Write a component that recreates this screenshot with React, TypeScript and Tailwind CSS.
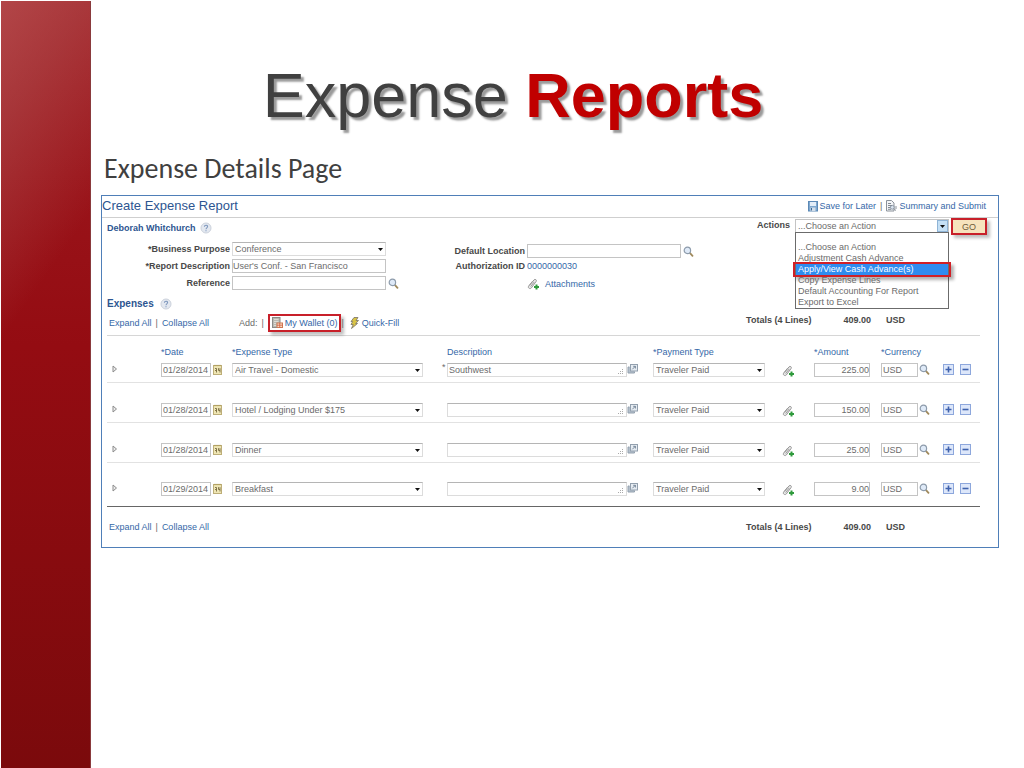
import { useState } from 'react';
import type { ReactNode } from 'react';

interface ExpenseLine {
    date: string;
    type: string;
    description: string;
    payment: string;
    amount: string;
    currency: string;
}

const initialLines: ExpenseLine[] = [
    { date: '01/28/2014', type: 'Air Travel - Domestic', description: 'Southwest', payment: 'Traveler Paid', amount: '225.00', currency: 'USD' },
    { date: '01/28/2014', type: 'Hotel / Lodging Under $175', description: '', payment: 'Traveler Paid', amount: '150.00', currency: 'USD' },
    { date: '01/28/2014', type: 'Dinner', description: '', payment: 'Traveler Paid', amount: '25.00', currency: 'USD' },
    { date: '01/29/2014', type: 'Breakfast', description: '', payment: 'Traveler Paid', amount: '9.00', currency: 'USD' },
];

const actions = [
    '...Choose an Action',
    'Adjustment Cash Advance',
    'Apply/View Cash Advance(s)',
    'Copy Expense Lines',
    'Default Accounting For Report',
    'Export to Excel',
];

const field = 'block h-[14px] border border-[#c4c4c4] bg-white text-[9px] leading-3 text-[#6b6b6b] outline-none';

function SearchIcon() {
    return (
        <svg width="11" height="11" viewBox="0 0 11 11" fill="none" className="shrink-0">
            <path d="M6.8 6.8l2.7 3" stroke="#a08a5c" strokeWidth="1.8" strokeLinecap="round" />
            <circle cx="4.4" cy="4.4" r="3.2" fill="#dfeaf8" stroke="#8d9bab" strokeWidth="1.2" />
        </svg>
    );
}

function HelpIcon() {
    return (
        <svg width="12" height="12" viewBox="0 0 12 12" fill="none" className="shrink-0">
            <circle cx="6" cy="6" r="5" fill="#e3e8f0" stroke="#ccd2dc" />
            <path d="M4.4 4.7c0-2 3.2-2 3.2-.1 0 1.2-1.6 1.3-1.6 2.6M6 8.3v1" stroke="#7f98bd" strokeWidth="1.1" />
        </svg>
    );
}

function ClipIcon() {
    return (
        <svg width="13" height="12" viewBox="0 0 13 12" fill="none" className="shrink-0">
            <path d="M2.6 7.3L7 1.900c1.100-1.300 3.200.1 2.100 1.600L4.400 9.900c-1.300 1.600-4.100.1-2.700-1.900L5.600 3.200" fill="#e6e6e6" stroke="#999" />
            <path d="M3.700 8.500L7.200 4" stroke="#999" strokeWidth=".9" />
            <path d="M9.500 6.500v5M7 9h5" stroke="#2f9a3c" strokeWidth="2" />
        </svg>
    );
}

function CalendarIcon() {
    return (
        <svg width="9" height="11" viewBox="0 0 9 11" fill="none" className="shrink-0">
            <rect x=".5" y="1.500" width="8" height="9" fill="#efe6b4" stroke="#bdae78" />
            <path d="M1 1.500h7" stroke="#b3a264" strokeWidth="1.200" />
            <path d="M2 4.500h1.500v4M3.500 6.500H2M5.500 4.200v2.300H7M7 4.200v4.300" stroke="#776a40" strokeWidth=".9" />
        </svg>
    );
}

function PopupIcon() {
    return (
        <svg width="11" height="10" viewBox="0 0 11 10" fill="none" className="shrink-0">
            <path d="M2.500 3H1v6h6.500V7.500" fill="#b4c0cc" stroke="#93a0ae" />
            <rect x="3.500" y=".5" width="7" height="6.500" fill="#e6ecf2" stroke="#93a0ae" />
            <path d="M5.300 5.300l3-3M6.200 2.300h2.200v2.200" stroke="#6d7f92" strokeWidth=".9" />
        </svg>
    );
}

function SaveIcon() {
    return (
        <svg width="10" height="11" viewBox="0 0 10 11" fill="none" className="shrink-0">
            <rect x=".5" y=".5" width="9" height="9.500" fill="#7fa8cf" stroke="#5c89b6" />
            <rect x="2" y="1" width="6" height="4" fill="#e4eef8" />
            <rect x="2.500" y="6.500" width="5" height="3.500" fill="#d3dfeb" />
            <path d="M3.500 7v2.500" stroke="#3d6792" />
        </svg>
    );
}

function SummaryIcon() {
    return (
        <svg width="11" height="12" viewBox="0 0 11 12" fill="none" className="shrink-0">
            <path d="M.5.500h5L8 3v8H.500z" fill="#f3f5f7" stroke="#8b929a" />
            <path d="M2 3.500h3M2 5.500h4M2 7.500h3M2 9.300h3" stroke="#777f88" strokeWidth=".9" />
            <circle cx="6.300" cy="7.300" r="1.900" fill="#dbe5f0" stroke="#7b8794" strokeWidth=".8" />
            <path d="M7.700 8.700l2.300 1.800M10 6v3" stroke="#8b929a" />
        </svg>
    );
}

function WalletIcon() {
    return (
        <svg width="11" height="11" viewBox="0 0 11 11" fill="none" className="shrink-0">
            <rect x=".5" y=".5" width="7.500" height="10" fill="#b9b9b2" stroke="#8a8a86" />
            <path d="M2 2.500h4.500M2 4.500h4.500M2 6.500h2M2 8.500h2" stroke="#dcdcd4" />
            <rect x="5" y="6" width="5.500" height="4.500" fill="#f5dcc0" stroke="#cf7a55" />
            <path d="M7.700 6v4.500M5 8.200h5.500" stroke="#d5593f" strokeWidth=".8" />
        </svg>
    );
}

function BoltIcon() {
    return (
        <svg width="9" height="12" viewBox="0 0 9 12" className="shrink-0">
            <path d="M4 .5h4L6 3.500h2.500L5.700 6.500h1.800L1.500 11.500l1.700-4H1l1.700-3H1z" fill="#d9c445" stroke="#77716a" strokeWidth=".8" />
        </svg>
    );
}

function Caret({ className = 'right-[3px]' }: { className?: string }) {
    return (
        <svg width="5" height="3" viewBox="0 0 5 3" className={`pointer-events-none absolute top-[6px] ${className}`}>
            <path d="M0 0h5L2.500 3z" fill="#111" />
        </svg>
    );
}

function Select({ id, label, value }: { id?: string; label?: string; value: string }) {
    return (
        <div className="relative w-full">
            <select
                id={id}
                aria-label={label}
                defaultValue={value}
                className={`${field} w-full appearance-none border-[#dcdcdc] border-t-[#b5b5b5] pl-[2px]`}
            >
                <option>{value}</option>
            </select>
            <Caret />
        </div>
    );
}

function Link({ children, className = '' }: { children: ReactNode; className?: string }) {
    return (
        <a href="#" className={`flex items-center whitespace-nowrap text-[#3568a8] ${className}`}>
            {children}
        </a>
    );
}

function ExpandLinks() {
    return (
        <div className="flex gap-1">
            <Link>Expand All</Link>
            <span>|</span>
            <Link>Collapse All</Link>
        </div>
    );
}

function Totals() {
    return (
        <div className="flex pr-[75px] font-bold text-[#484848]">
            <span>Totals (4 Lines)</span>
            <span className="ml-8">409.00</span>
            <span className="ml-[15px]">USD</span>
        </div>
    );
}

function LineButton({ sign, label, onClick }: { sign: '+' | '-'; label: string; onClick: () => void }) {
    return (
        <button onClick={onClick} aria-label={label} className="size-[11px] border border-[#8da7dc] bg-[#dde7fa]">
            <svg width="9" height="9" viewBox="0 0 9 9">
                <path d={sign === '+' ? 'M1.500 4.500h6M4.500 1.500v6' : 'M1.500 4.500h6'} stroke="#3f62ad" strokeWidth="1.600" />
            </svg>
        </button>
    );
}

function ActionPicker() {
    const [selected, setSelected] = useState(2);

    return (
        <div className="flex items-start pt-px">
            <label htmlFor="action" className="mr-[5px] font-bold text-[#484848]">Actions</label>
            <div className="relative w-[154px]">
                <select id="action" className={`${field} w-full appearance-none border-[#7f9db9] pl-[2px]`}>
                    <option>...Choose an Action</option>
                </select>
                <div className="pointer-events-none absolute top-px right-px h-3 w-[11px] border border-[#8fb4d6] bg-[#c5e0f5]" />
                <Caret className="right-[4px]" />
                <ul role="listbox" aria-label="Actions" className="absolute inset-x-0 top-[13px] z-10 border border-[#6b6b6b] bg-white pt-[9px] text-[#6b6b6b]">
                    {actions.map((action, i) => (
                        <li
                            key={action}
                            role="option"
                            aria-selected={i === selected}
                            onClick={() => setSelected(i)}
                            className={`relative h-[11px] pl-[2px] leading-[11px] ${i === selected ? 'bg-[#2f8cf0] text-white' : ''}`}
                        >
                            {action}
                            {i === selected && (
                                <span className="absolute -inset-x-[3px] -inset-y-[2px] border-2 border-[#d02027] shadow-[3px_3px_3px_rgba(0,0,0,0.3)]" />
                            )}
                        </li>
                    ))}
                </ul>
            </div>
            <button className="-mt-px ml-[2px] h-[17px] w-9 border-2 border-[#c8202a] bg-[#f6e3bd] text-[#6d5c3a] shadow-[3px_3px_3px_rgba(0,0,0,0.25)]">
                GO
            </button>
        </div>
    );
}

export default function App() {
    const [lines, setLines] = useState(initialLines);

    const addLine = (at: number) =>
        setLines((prev) => [...prev.slice(0, at + 1), { ...prev[at], description: '' }, ...prev.slice(at + 1)]);
    const removeLine = (at: number) => setLines((prev) => prev.filter((_, i) => i !== at));

    return (
        <div className="flex min-h-screen bg-white pt-px pl-px font-['Liberation_Sans',Arial,sans-serif]">
            <aside className="w-[90px] shrink-0 border-r border-[#8a3a3c] bg-[linear-gradient(125deg,rgba(188,92,92,0.65),rgba(180,90,90,0.45)_14%,transparent_38%),linear-gradient(180deg,#a01c22,#940c12_45%,#7b0a0c)]" />

            <main className="min-w-0 flex-1 pr-[25px] pl-[10px]">
                <h1 className="pt-[58px] pr-[74px] text-center text-[63px] leading-[72px] text-[#404040] [text-shadow:3px_3px_2px_rgba(0,0,0,0.4)]">
                    Expense <span className="font-bold text-[#c00000]">Reports</span>
                </h1>
                <h2 className="mt-[20px] pl-[3px] font-[Carlito,Lato,sans-serif] text-[28px] leading-9 text-[#404040]">
                    Expense Details Page
                </h2>

                <section className="mt-[8px] border border-[#4f7fb8] pb-[14px] text-[9px] leading-3 text-[#6b6b6b]">
                    <header className="flex h-[22px] items-center justify-between border-b border-[#cfcfcf] pr-3 pb-px">
                        <h3 className="text-[13px] text-[#2d5591]">Create Expense Report</h3>
                        <nav className="flex items-center gap-1">
                            <Link className="gap-[2px]"><SaveIcon />Save for Later</Link>
                            <span>|</span>
                            <Link className="gap-[2px]"><SummaryIcon />Summary and Submit</Link>
                        </nav>
                    </header>

                    <div className="grid grid-cols-[347px_minmax(0,1fr)_auto] pr-[11px]">
                        <div>
                            <h4 className="mt-1 flex items-center gap-1 pl-[5px] font-bold text-[#2d5591]">
                                Deborah Whitchurch <HelpIcon />
                            </h4>
                            <div className="mt-[8px] grid grid-cols-[128px_154px_auto] items-center gap-x-[2px] gap-y-[3px]">
                                <label htmlFor="purpose" className="text-right font-bold text-[#484848]">*Business Purpose</label>
                                <Select id="purpose" value="Conference" />
                                <span />
                                <label htmlFor="description" className="text-right font-bold text-[#484848]">*Report Description</label>
                                <input id="description" defaultValue="User's Conf. - San Francisco" className={field} />
                                <span />
                                <label htmlFor="reference" className="text-right font-bold text-[#484848]">Reference</label>
                                <input id="reference" className={field} />
                                <button aria-label="Look up reference"><SearchIcon /></button>
                            </div>
                        </div>

                        <div className="mt-[26px] grid grid-cols-[76px_154px_auto] content-start items-center gap-x-[2px] gap-y-[2px]">
                            <label htmlFor="location" className="text-right font-bold text-[#484848]">Default Location</label>
                            <input id="location" className={field} />
                            <button aria-label="Look up location"><SearchIcon /></button>
                            <span className="text-right font-bold whitespace-nowrap text-[#484848]">Authorization ID</span>
                            <Link>0000000030</Link>
                            <span />
                            <span />
                            <Link className="mt-1 gap-[5px]"><ClipIcon />Attachments</Link>
                        </div>

                        <ActionPicker />
                    </div>

                    <h4 className="mt-[8px] flex items-center gap-[6px] pl-[5px] text-[10px] font-bold text-[#2d5591]">
                        Expenses <HelpIcon />
                    </h4>
                    <div className="mr-[18px] ml-[5px] flex h-[26px] items-center justify-between border-b border-[#d6d6d6] pl-[2px]">
                        <div className="flex items-center">
                            <ExpandLinks />
                            <span className="ml-[30px]">Add:</span>
                            <span className="mx-1">|</span>
                            <Link className="h-[18px] gap-[2px] border-2 border-[#c8202a] bg-white px-[2px] shadow-[3px_3px_3px_rgba(0,0,0,0.25)]">
                                <WalletIcon />My Wallet (0)
                            </Link>
                            <span className="mr-[6px]">|</span>
                            <Link className="gap-[3px]"><BoltIcon />Quick-Fill</Link>
                        </div>
                        <div className="pb-[6px]"><Totals /></div>
                    </div>

                    <div className="pr-[18px] pl-[5px]">
                        <table className="w-full table-fixed border-b border-[#666]">
                            <colgroup>
                                <col className="w-[54px]" />
                                <col className="w-[71px]" />
                                <col className="w-[215px]" />
                                <col />
                                <col className="w-[129px]" />
                                <col className="w-[32px]" />
                                <col className="w-[67px]" />
                                <col className="w-[62px]" />
                                <col className="w-[37px]" />
                            </colgroup>
                            <thead>
                                <tr className="h-[22px] text-left align-bottom text-[#3568a8] *:p-0 *:font-normal">
                                    <th />
                                    <th>*Date</th>
                                    <th>*Expense Type</th>
                                    <th>Description</th>
                                    <th>*Payment Type</th>
                                    <th />
                                    <th>*Amount</th>
                                    <th>*Currency</th>
                                    <th />
                                </tr>
                            </thead>
                            <tbody>
                                {lines.map((line, i) => (
                                    <tr
                                        key={i}
                                        className="h-10 border-b border-[#e2e2e2] align-bottom *:p-0 *:pb-[5px] first:h-6 last:h-[44px] last:border-0 last:*:pb-[10px]"
                                    >
                                        <td>
                                            <button aria-label="Expand line" className="mb-[4px] ml-[5px] block">
                                                <svg width="6" height="8" viewBox="0 0 6 8" fill="#eee" stroke="#8c8c8c">
                                                    <path d="M1 1v6l3.500-3z" />
                                                </svg>
                                            </button>
                                        </td>
                                        <td>
                                            <div className="flex items-center gap-[2px]">
                                                <input aria-label="Date" defaultValue={line.date} className={`${field} w-[50px] pl-px`} />
                                                <button aria-label="Choose a date"><CalendarIcon /></button>
                                            </div>
                                        </td>
                                        <td>
                                            <div className="w-[191px]"><Select label="Expense Type" value={line.type} /></div>
                                        </td>
                                        <td>
                                            <div className="relative flex items-center pr-[15px]">
                                                {i === 0 && <span className="absolute -top-[2px] -left-[5px]">*</span>}
                                                <input aria-label="Description" defaultValue={line.description} className={`${field} min-w-0 flex-1 border-[#dcdcdc] border-t-[#b5b5b5] pl-[1px]`} />
                                                <svg width="6" height="6" viewBox="0 0 6 6" className="absolute right-[29px] bottom-[2px]" fill="#aaa">
                                                    <path d="M4 0h1v1H4zM4 2h1v1H4zM2 2h1v1H2zM4 4h1v1H4zM2 4h1v1H2zM0 4h1v1H0z" />
                                                </svg>
                                                <button aria-label="Open description" className="pb-[2px]"><PopupIcon /></button>
                                            </div>
                                        </td>
                                        <td>
                                            <div className="w-[112px]"><Select label="Payment Type" value={line.payment} /></div>
                                        </td>
                                        <td>
                                            <button aria-label="Attach receipt" className="block"><ClipIcon /></button>
                                        </td>
                                        <td>
                                            <input aria-label="Amount" defaultValue={line.amount} className={`${field} w-14 text-right`} />
                                        </td>
                                        <td>
                                            <div className="flex items-center gap-px">
                                                <input aria-label="Currency" defaultValue={line.currency} className={`${field} w-[37px] pl-px`} />
                                                <button aria-label="Look up currency"><SearchIcon /></button>
                                            </div>
                                        </td>
                                        <td>
                                            <div className="flex gap-[6px] pb-[2px]">
                                                <LineButton sign="+" label="Add line" onClick={() => addLine(i)} />
                                                <LineButton sign="-" label="Remove line" onClick={() => removeLine(i)} />
                                            </div>
                                        </td>
                                    </tr>
                                ))}
                            </tbody>
                        </table>
                    </div>

                    <footer className="mt-[14px] mr-[18px] ml-[5px] flex items-center justify-between pl-[2px]">
                        <ExpandLinks />
                        <Totals />
                    </footer>
                </section>
            </main>
        </div>
    );
}
